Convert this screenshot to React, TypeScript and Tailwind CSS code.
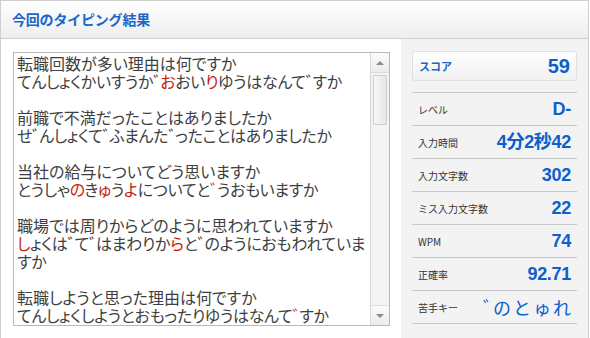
import React from 'react';

type Seg = string | { r: string };

const lines: Seg[][] = [
  ['転職回数が多い理由は何ですか'],
  ['てんしょくかいすうか゛', { r: 'お' }, 'おい', { r: 'り' }, 'ゆうはなんて゛すか'],
  [],
  ['前職で不満だったことはありましたか'],
  ['せ゛んしょくて゛ふまんた゛ったことはありましたか'],
  [],
  ['当社の給与についてどう思いますか'],
  ['とうしゃ', { r: 'の' }, 'き', { r: 'ゅ' }, 'う', { r: 'よ' }, 'についてと', { r: '゛' }, 'うおもいますか'],
  [],
  ['職場では周りからどのように思われていますか'],
  [{ r: 'し' }, 'ょくは゛て゛はまわりか', { r: 'ら' }, 'と゛のようにおもわれていま'],
  ['すか'],
  [],
  ['転職しようと思った理由は何ですか'],
  ['てんしょくしようとおもったりゆうはなんて', { r: '゛' }, 'すか'],
];

// reading (kana) lines are set a little tighter than the question lines
const kanaLines = [1, 4, 7, 10, 11, 14];

const stats = [
  { label: 'レベル', value: 'D-' },
  { label: '入力時間', value: '4分2秒42' },
  { label: '入力文字数', value: '302' },
  { label: 'ミス入力文字数', value: '22' },
  { label: 'WPM', value: '74' },
  { label: '正確率', value: '92.71' },
];

const font = { fontFamily: '"Noto Sans CJK JP", "Liberation Sans", sans-serif' };

// the sound mark ゛ is drawn narrow in the original, so give it a half-width box
function renderText(text: string, red: boolean, key: string) {
  const parts = text.split(/(゛)/).filter((p) => p !== '');
  return parts.map((p, k) =>
    p === '゛' ? (
      <span key={`${key}-${k}`} className={`inline-block w-[7px] overflow-visible ${red ? 'text-[#d2401a]' : ''}`}>
        ゛
      </span>
    ) : (
      <span key={`${key}-${k}`} className={red ? 'text-[#c81e0a]' : ''}>
        {p}
      </span>
    )
  );
}

export default function App() {
  return (
    <div className="w-[590px] h-[338px] overflow-hidden bg-white" style={font}>
      <div className="w-[589px] h-[345px] border border-[#cfcfcf] flex flex-col">
        {/* Header */}
        <div className="h-[38px] shrink-0 border-b border-[#cfcfcf] bg-gradient-to-b from-white to-[#eeeeee] flex items-center pl-[11px]">
          <h1 className="text-[14px] font-bold text-[#1a67c9] tracking-[-0.2px]">今回のタイピング結果</h1>
        </div>

        <div className="flex flex-1">
          {/* Answer box */}
          <div className="pl-[12px] pt-[13px]">
            <div className="w-[377px] h-[274px] border border-[#b9b9b9] flex">
              <div
                className="flex-1 pl-[3px] pt-[1px] text-[16px] leading-[18px] text-[#3f3f3f] whitespace-nowrap overflow-hidden"
                style={{ fontFeatureSettings: '"palt"' }}
              >
                {lines.map((l, i) => (
                  <div key={i} className={kanaLines.includes(i) ? 'h-[18px] tracking-[-0.3px]' : 'h-[18px]'}>
                    {l.map((s, j) =>
                      typeof s === 'string'
                        ? renderText(s, false, `${i}-${j}`)
                        : renderText(s.r, true, `${i}-${j}`)
                    )}
                  </div>
                ))}
              </div>
              {/* Scrollbar */}
              <div className="w-[19px] border-l border-[#d6d6d6] bg-[#f4f4f4] flex flex-col">
                <div className="h-[20px] border-b border-[#dcdcdc] bg-gradient-to-b from-[#fbfbfb] to-[#ececec] flex items-center justify-center">
                  <div className="w-0 h-0 border-l-[4px] border-r-[4px] border-b-[4px] border-l-transparent border-r-transparent border-b-[#8a8a8a]" />
                </div>
                <div className="mx-[2px] mt-[2px] h-[50px] border border-[#cfcfcf] rounded-[1px] bg-gradient-to-r from-[#f7f7f7] to-[#e6e6e6]" />
                <div className="flex-1" />
                <div className="h-[20px] border-t border-[#dcdcdc] bg-gradient-to-b from-[#fbfbfb] to-[#ececec] flex items-center justify-center">
                  <div className="w-0 h-0 border-l-[4px] border-r-[4px] border-t-[4px] border-l-transparent border-r-transparent border-t-[#8a8a8a]" />
                </div>
              </div>
            </div>
          </div>

          {/* Stats panel */}
          <div className="ml-[11px] w-[187px] bg-[#f3f3f3] px-[11px] pt-[12px]">
            <div className="h-[30px] rounded-[3px] border border-[#e0e0e0] bg-gradient-to-b from-white to-[#f1f1f1] flex items-center justify-between pl-[6px] pr-[6px]">
              <span className="text-[11px] font-bold text-[#1a67c9]">スコア</span>
              <span className="text-[20px] font-bold text-[#0d5fcc] leading-none" style={{ fontFamily: '"Liberation Sans", sans-serif' }}>59</span>
            </div>
            <div className="mt-[11px] border-t border-[#c8c8c8]">
              {stats.map((s) => (
                <div key={s.label} className="h-[33px] border-b border-[#c8c8c8] flex items-center justify-between pl-[6px] pr-[6px]">
                  <span className="text-[10px] text-[#333]">{s.label}</span>
                  <span
                    className="text-[18px] font-bold text-[#0d5fcc] leading-none tracking-[-0.3px]"
                    style={{ fontFamily: '"Liberation Sans", "Noto Sans CJK JP", sans-serif' }}
                  >
                    {s.value}
                  </span>
                </div>
              ))}
              <div className="h-[33px] border-b border-[#c8c8c8] flex items-center justify-between pl-[6px] pr-[4px]">
                <span className="text-[10px] text-[#333]">苦手キー</span>
                <span className="text-[18px] text-[#0d5fcc] leading-none tracking-[2px]">
                  <span className="inline-block w-[10px] overflow-visible">゛</span>のとゅれ
                </span>
              </div>
            </div>
          </div>
        </div>
      </div>
    </div>
  );
}
